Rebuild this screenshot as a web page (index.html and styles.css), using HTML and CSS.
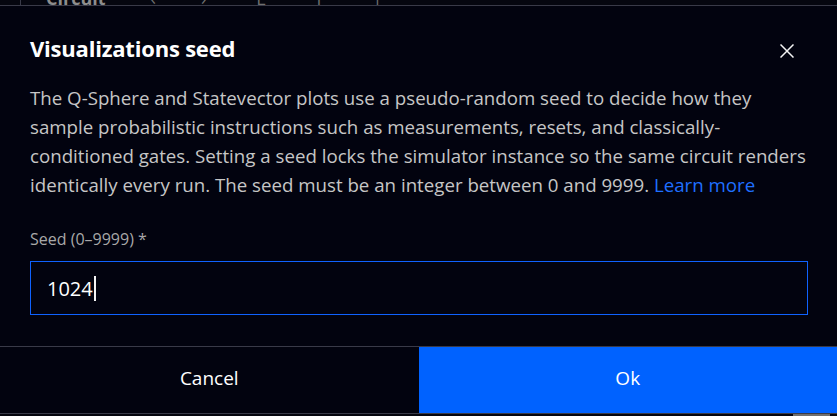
FILE: index.html
```html
<!DOCTYPE html>
<html lang="en">
<head>
    <meta charset="UTF-8">
    <title>Visualizations seed</title>
    <link rel="stylesheet" href="styles.css">
</head>
<body>
<div class="behind">
    <span class="rule"></span>
    <b class="tab">Circuit</b>
    <span class="nav">&lsaquo;</span>
    <span class="nav">&rsaquo;</span>
    <span class="tool">E</span>
    <span class="tool">f</span>
    <span class="tool">|</span>
</div>
<div class="modal">
    <div class="head">
        <h2 class="title">Visualizations seed</h2>
        <button class="close" aria-label="Close">
            <svg width="14" height="14" viewBox="0 0 14 14"><path d="M0.5 0.5 L13.5 13.5 M13.5 0.5 L0.5 13.5" stroke="#f4f4f4" stroke-width="1.5" fill="none"/></svg>
        </button>
    </div>
    <div class="body">
        <p class="desc">The Q-Sphere and Statevector plots use a pseudo-random seed to decide how they<br>
            sample probabilistic instructions such as measurements, resets, and classically-<br>
            conditioned gates. Setting a seed locks the simulator instance so the same circuit renders<br>
            identically every run. The seed must be an integer between 0 and 9999. <a href="#">Learn more</a></p>
        <label class="label">Seed (0–9999) *</label>
        <div class="field"><span class="val">1024</span><span class="caret"></span></div>
    </div>
    <div class="foot">
        <button class="btn cancel">Cancel</button>
        <button class="btn ok">Ok</button>
    </div>
</div>
<div class="under">
    <span class="thumb"></span>
</div>
</body>
</html>
```

FILE: styles.css
```css
* {
    box-sizing: border-box;
}
body {
    margin: 0;
    width: 837px;
    height: 416px;
    overflow: hidden;
    background-color: #05060f;
    font-family: "Open Sans", "Noto Sans", sans-serif;
    color: #c6c6c6;
}
.behind {
    height: 5px;
    overflow: hidden;
    display: flex;
    align-items: flex-start;
    color: #6f6f6f;
    font-size: 18px;
    line-height: 18px;
}
.behind span, .behind b {
    margin-top: -11px;
}
.behind .rule {
    width: 1px;
    height: 20px;
    background: #393a48;
    margin-left: 20px;
}
.behind .tab {
    margin-left: 25px;
    color: #8d8d8d;
}
.behind .nav {
    margin-left: 45px;
}
.behind .tool {
    margin-left: 50px;
}
.modal {
    height: 409px;
    border-top: 1px solid #393a48;
    border-bottom: 1px solid #393a48;
    background-color: #02030f;
    display: flex;
    flex-direction: column;
}
.head {
    display: flex;
    justify-content: space-between;
    align-items: flex-start;
    padding: 28px 43px 0 30px;
}
.title {
    margin: 0;
    font-size: 22px;
    font-weight: 700;
    color: #ffffff;
    line-height: 28px;
    letter-spacing: -0.2px;
}
.close {
    background: none;
    border: 0;
    padding: 0;
    margin-top: 10px;
    width: 14px;
    height: 14px;
    cursor: pointer;
}
.close svg {
    display: block;
}
.body {
    padding: 21px 29px 0 30px;
    flex: 1;
}
.desc {
    margin: 0;
    font-size: 18.7px;
    line-height: 29px;
    color: #c6c6c6;
    white-space: nowrap;
}
.desc a {
    color: #1f6fff;
    text-decoration: none;
}
.label {
    display: block;
    margin-top: 30px;
    font-size: 16px;
    line-height: 20px;
    color: #a8a8a8;
}
.field {
    margin-top: 12px;
    height: 54px;
    border: 1px solid #0f62fe;
    padding: 0 16px;
    display: flex;
    align-items: center;
    font-size: 20px;
    color: #ffffff;
}
.caret {
    width: 2px;
    height: 25px;
    background: #f4f4f4;
    margin-left: 1px;
}
.foot {
    display: flex;
    height: 67px;
    border-top: 1px solid #393a48;
}
.btn {
    flex: 1;
    border: 0;
    margin: 0;
    padding: 0 0 4px;
    font-family: inherit;
    font-size: 19px;
    font-weight: 500;
    color: #ffffff;
    cursor: pointer;
}
.cancel {
    background-color: #02030f;
}
.ok {
    background-color: #0062ff;
}
.under {
    height: 2px;
    display: flex;
    justify-content: flex-end;
}
.thumb {
    width: 37px;
    height: 2px;
    background: #6f6f6f;
    margin-right: 7px;
}
```
